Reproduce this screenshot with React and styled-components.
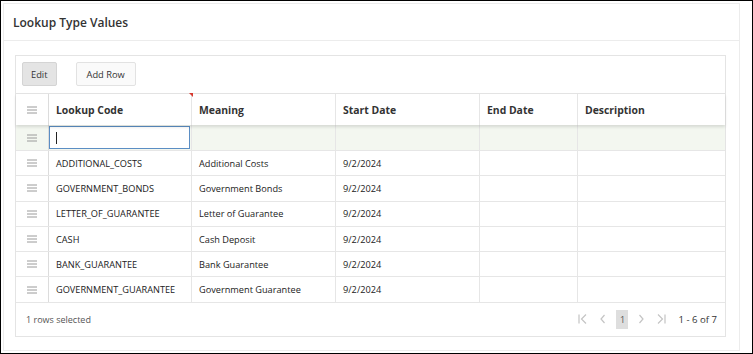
import React from 'react';
import styled, { createGlobalStyle } from 'styled-components';

const GlobalStyle = createGlobalStyle`
  html, body {
    margin: 0;
    padding: 0;
    background: #fff;
  }
  body {
    font-family: "Open Sans", "Noto Sans", Arial, sans-serif;
    color: #161513;
  }
`;

const Frame = styled.div`
  box-sizing: border-box;
  width: 753px;
  height: 354px;
  border: 1px solid #000;
  padding: 2px 12px 2px 2px;
  background: #fff;
`;

const Panel = styled.section`
  box-sizing: border-box;
  height: 100%;
  border: 1px solid #ececec;
  display: flex;
  flex-direction: column;
`;

const Header = styled.header`
  height: 36px;
  display: flex;
  align-items: center;
  padding-left: 9px;
  border-bottom: 1px solid #ececec;

  h1 {
    margin: 0;
    font-size: 12px;
    font-weight: 600;
    color: #333;
  }
`;

const Body = styled.div`
  padding: 14px 13px 12px 11px;
`;

const Card = styled.div`
  border: 1px solid #e4e4e4;
  display: flex;
  flex-direction: column;
`;

const Toolbar = styled.div`
  display: flex;
  gap: 19px;
  padding: 6px 6px 7px;
`;

const Button = styled.button`
  height: 24px;
  padding: 0 ${(p) => (p.$pressed ? '8px' : '10px')};
  font-family: inherit;
  font-size: 9.3px;
  color: #333;
  background: ${(p) => (p.$pressed ? '#e4e4e4' : '#fafafa')};
  border: 1px solid ${(p) => (p.$pressed ? '#d4d4d4' : '#e2e2e2')};
  border-radius: 2px;
`;

const cols = '33px 143px 144px 144px 98px 147px';

const Grid = styled.div`
  border-top: 1px solid #e4e4e4;
  display: flex;
  flex-direction: column;
`;

const Row = styled.div`
  display: grid;
  grid-template-columns: ${cols};
  height: ${(p) => p.$h || 25}px;
  box-sizing: border-box;
  border-bottom: 1px solid #e6e6e6;
  background: ${(p) => p.$bg || '#fff'};
  position: relative;
`;

const HeadRow = styled(Row)`
  border-bottom: none;
  box-shadow: 0 2px 3px rgba(0, 0, 0, 0.12);
  z-index: 1;
`;

const Cell = styled.div`
  display: flex;
  align-items: center;
  padding-left: 7px;
  font-size: 9.2px;
  color: #222;
  border-right: 1px solid ${(p) => (p.$last ? 'transparent' : '#e6e6e6')};
  position: relative;
  white-space: nowrap;
  overflow: hidden;
`;

const HeadCell = styled(Cell)`
  font-weight: 700;
  font-size: 10.4px;
  color: #333;
  overflow: visible;
`;

const DragCell = styled(Cell)`
  justify-content: center;
  padding-left: 0;
  border-right: 1px solid #dcdcdc;
`;

const Required = styled.span`
  position: absolute;
  top: -1px;
  right: -2px;
  width: 0;
  height: 0;
  border-left: 4px solid transparent;
  border-top: 4px solid #d6392f;
`;

const InputCell = styled.div`
  border-right: 1px solid #e6e6e6;
  padding: 1px 1px 1px 0;
  display: flex;
`;

const Input = styled.div`
  flex: 1;
  box-sizing: border-box;
  border: 1px solid #5b8ec4;
  background: #fff;
  display: flex;
  align-items: center;
  padding-left: 6px;

  span {
    width: 1px;
    height: 12px;
    background: #222;
  }
`;

const Footer = styled.div`
  height: 33px;
  display: flex;
  align-items: center;
  justify-content: space-between;
  padding: 0 8px 0 10px;
  font-size: 9px;
  color: #555;
`;

const Pager = styled.div`
  display: flex;
  align-items: center;
  gap: 6px;
  color: #bbb;
`;

const PageNum = styled.span`
  display: inline-flex;
  align-items: center;
  justify-content: center;
  width: 12px;
  height: 19px;
  background: #dedede;
  color: #555;
  font-size: 9px;
`;

const Count = styled.span`
  margin-left: 4px;
  font-size: 9.6px;
  color: #333;
`;

const Handle = () => (
  <svg width="10" height="8" viewBox="0 0 10 8">
    <path d="M0 1h10M0 4h10M0 7h10" stroke="#9a9a9a" strokeWidth="1" />
  </svg>
);

const Nav = ({ d }) => (
  <svg width="14" height="14" viewBox="0 0 14 14" fill="none" stroke="#c4c4c4" strokeWidth="1.2">
    <path d={d} />
  </svg>
);

const rows = [
  ['ADDITIONAL_COSTS', 'Additional Costs', '9/2/2024'],
  ['GOVERNMENT_BONDS', 'Government Bonds', '9/2/2024'],
  ['LETTER_OF_GUARANTEE', 'Letter of Guarantee', '9/2/2024'],
  ['CASH', 'Cash Deposit', '9/2/2024'],
  ['BANK_GUARANTEE', 'Bank Guarantee', '9/2/2024'],
  ['GOVERNMENT_GUARANTEE', 'Government Guarantee', '9/2/2024'],
];

export default function App() {
  return (
    <>
      <GlobalStyle />
      <Frame>
        <Panel>
          <Header>
            <h1>Lookup Type Values</h1>
          </Header>
          <Body>
            <Card>
              <Toolbar>
                <Button $pressed>Edit</Button>
                <Button>Add Row</Button>
              </Toolbar>
              <Grid>
                <HeadRow $h={31}>
                  <DragCell><Handle /></DragCell>
                  <HeadCell>
                    Lookup Code
                    <Required />
                  </HeadCell>
                  <HeadCell>Meaning</HeadCell>
                  <HeadCell>Start Date</HeadCell>
                  <HeadCell>End Date</HeadCell>
                  <HeadCell $last>Description</HeadCell>
                </HeadRow>
                <Row $h={26} $bg="#f3f7f0">
                  <DragCell><Handle /></DragCell>
                  <InputCell>
                    <Input><span /></Input>
                  </InputCell>
                  <Cell />
                  <Cell />
                  <Cell />
                  <Cell $last />
                </Row>
                {rows.map(([code, meaning, date]) => (
                  <Row key={code} $h={25.3}>
                    <DragCell><Handle /></DragCell>
                    <Cell>{code}</Cell>
                    <Cell>{meaning}</Cell>
                    <Cell>{date}</Cell>
                    <Cell />
                    <Cell $last />
                  </Row>
                ))}
              </Grid>
              <Footer>
                <span>1 rows selected</span>
                <Pager>
                  <Nav d="M3 2.5v9M10 2.5L5.5 7l4.5 4.5" />
                  <Nav d="M8.5 3L5 7l3.5 4" />
                  <PageNum>1</PageNum>
                  <Nav d="M5.5 3L9 7l-3.5 4" />
                  <Nav d="M4 2.5L8.5 7 4 11.5M11 2.5v9" />
                  <Count>1 - 6 of 7</Count>
                </Pager>
              </Footer>
            </Card>
          </Body>
        </Panel>
      </Frame>
    </>
  );
}
